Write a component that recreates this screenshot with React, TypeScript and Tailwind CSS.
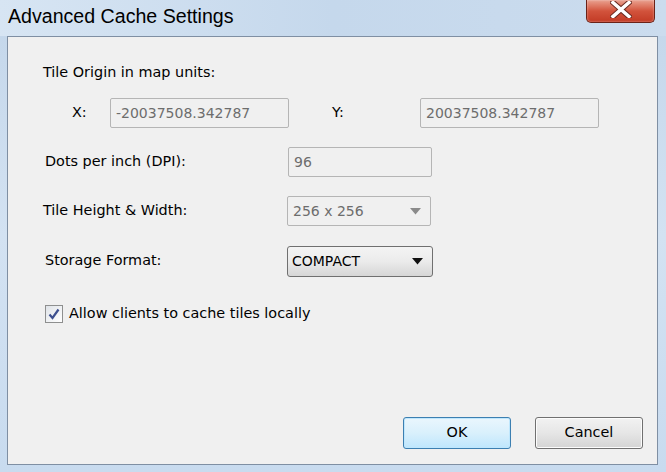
import React from "react";

const font = { fontFamily: '"DejaVu Sans", Tahoma, sans-serif' };

const Field = ({ value, width }: { value: string; width: string }) => (
  <div
    className={`${width} h-[30px] flex items-center px-[5px] border border-[#b5b5b5] rounded-[2px] bg-[#f0f0f0] text-[14px] text-[#6d6d6d]`}
  >
    {value}
  </div>
);

const Arrow = ({ color }: { color: string }) => (
  <svg width="11" height="7" viewBox="0 0 11 7">
    <path d="M0 0h11L5.5 6.5z" fill={color} />
  </svg>
);

const App: React.FC = () => {
  return (
    <div
      className="w-[666px] h-[472px] flex flex-col bg-gradient-to-b from-[#c3d6ea] via-[#d3e2f2] to-[#c8dbef] overflow-hidden"
      style={font}
    >
      {/* title bar */}
      <div className="h-[36px] flex items-start justify-between bg-gradient-to-r from-[#d7e5f3] via-[#c5d8ec] to-[#cbdcee]">
        <span
          className="pl-[8px] pt-[4px] text-[19.6px] text-black leading-[24px]"
          style={{ fontFamily: '"Liberation Sans", Arial, sans-serif' }}
        >
          Advanced Cache Settings
        </span>
        <div className="mr-[11px] w-[69px] h-[23px] rounded-b-[5px] border border-t-0 border-[#6b2217] bg-gradient-to-b from-[#e9a08f] via-[#d2533c] to-[#c23a24] flex items-center justify-center shadow-[inset_0_0_2px_rgba(255,255,255,0.6)]">
          <svg width="22" height="17" viewBox="0 0 22 17" className="-mt-[3px]">
            <path d="M3 1.5L19 15.5M19 1.5L3 15.5" stroke="#6a2a20" strokeWidth="5.5" strokeLinecap="square" />
            <path d="M3 1.5L19 15.5M19 1.5L3 15.5" stroke="#ffffff" strokeWidth="3.5" strokeLinecap="square" />
          </svg>
        </div>
      </div>

      <div className="flex flex-1">
        <div className="w-[7px]" />
        {/* client area */}
        <div className="flex-1 bg-[#f0f0f0] border border-[#7f8fa3] flex flex-col text-[14.4px] text-black">
          <div className="ml-[35px] mt-[26px] leading-[18px]">Tile Origin in map units:</div>

          <div className="flex items-center mt-[17px] h-[30px]">
            <span className="ml-[64px] w-[38px]">X:</span>
            <Field value="-20037508.342787" width="w-[179px]" />
            <span className="ml-[43px] w-[88px]">Y:</span>
            <Field value="20037508.342787" width="w-[179px]" />
          </div>

          <div className="flex items-center mt-[19px] h-[30px]">
            <span className="ml-[37px] w-[243px]">Dots per inch (DPI):</span>
            <Field value="96" width="w-[144px]" />
          </div>

          <div className="flex items-center mt-[19px] h-[30px]">
            <span className="ml-[35px] w-[244px]">Tile Height &amp; Width:</span>
            <div className="w-[144px] h-[30px] flex items-center justify-between pl-[5px] pr-[9px] border border-[#b5b5b5] rounded-[2px] bg-[#f0f0f0] text-[14px] text-[#6d6d6d]">
              <span>256 x 256</span>
              <Arrow color="#8a8a8a" />
            </div>
          </div>

          <div className="flex items-center mt-[20px] h-[30px]">
            <span className="ml-[37px] w-[242px]">Storage Format:</span>
            <div className="w-[146px] h-[31px] flex items-center justify-between pl-[4px] pr-[9px] border border-[#707070] rounded-[3px] bg-gradient-to-b from-[#f4f4f4] via-[#ebebeb] to-[#d6d6d6] text-[14px]">
              <span>COMPACT</span>
              <Arrow color="#111" />
            </div>
          </div>

          <div className="flex items-center mt-[28px] ml-[37px] h-[20px]">
            <div className="w-[18px] h-[18px] border border-[#8e8f8f] bg-gradient-to-br from-[#dfe3e8] to-[#ffffff] flex items-center justify-center">
              <svg width="12" height="12" viewBox="0 0 12 12">
                <path d="M1.5 6.5L4.5 10L10.5 1.5" stroke="#3d4f8f" strokeWidth="2.2" fill="none" />
              </svg>
            </div>
            <span className="ml-[6px]">Allow clients to cache tiles locally</span>
          </div>

          <div className="flex-1" />

          <div className="flex justify-end gap-[24px] mr-[14px] mb-[15px]">
            <button className="w-[108px] h-[32px] rounded-[3px] border border-[#3c7fb1] bg-gradient-to-b from-[#eaf6fd] via-[#d9f0fc] to-[#bee6fd] shadow-[inset_0_0_0_1px_#bfe7fd]">
              OK
            </button>
            <button className="w-[108px] h-[32px] rounded-[3px] border border-[#707070] bg-gradient-to-b from-[#f2f2f2] via-[#e6e6e6] to-[#d4d4d4] shadow-[inset_0_0_0_1px_#fcfcfc]">
              Cancel
            </button>
          </div>
        </div>
        <div className="w-[8px]" />
      </div>
      <div className="h-[7px]" />
    </div>
  );
};

export default App;
